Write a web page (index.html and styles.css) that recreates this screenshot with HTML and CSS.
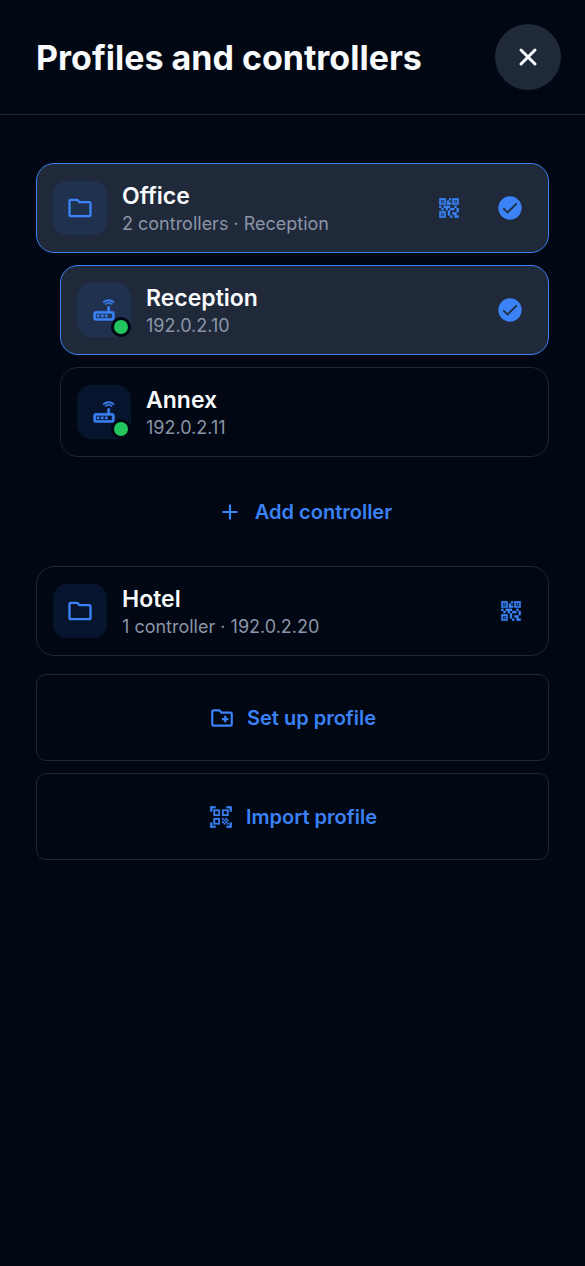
FILE: index.html
```html
<!DOCTYPE html>
<html lang="en">
<head>
<meta charset="utf-8">
<meta name="viewport" content="width=device-width, initial-scale=1">
<title>Profiles and controllers</title>
<link rel="stylesheet" href="styles.css">
</head>
<body>
<svg class="sprite" aria-hidden="true">
  <symbol id="folder" viewBox="0 0 24 24"><path d="M4 20q-.8 0-1.400-.6T2 18V6q0-.8.6-1.400T4 4h5.200q.4 0 .75.150t.65.450L12 6h8q.8 0 1.400.6T22 8v10q0 .8-.6 1.400T20 20H4Zm0-2h16V8h-8.800l-2-2H4v12Z"/></symbol>
  <symbol id="router" viewBox="0 0 24 24"><path d="M20.200 5.900l.8-.8C19.600 3.700 17.800 3 16 3s-3.600.7-5 2.100l.8.8C13 4.800 14.500 4.200 16 4.200s3 .6 4.200 1.700zm-.9.800c-.9-.9-2.100-1.400-3.300-1.400s-2.400.5-3.300 1.400l.8.800c.7-.7 1.600-1 2.500-1 .9 0 1.800.3 2.500 1l.8-.8zM19 13h-2V9h-2v4H5c-1.100 0-2 .9-2 2v4c0 1.100.9 2 2 2h14c1.100 0 2-.9 2-2v-4c0-1.100-.9-2-2-2zm0 6H5v-4h14v4zM6 16h2v2H6zm3.500 0h2v2h-2zm3.500 0h2v2h-2z" stroke="currentColor" stroke-width=".3"/></symbol>
  <symbol id="qr" viewBox="0 0 24 24"><path d="M15 21h-2v-2h2v2zm-2-7h-2v5h2v-5zm8-2h-2v4h2v-4zm-2-2h-2v2h2v-2zM7 12H5v2h2v-2zm-2-2H3v2h2v-2zm7-5h2V3h-2v2zm-7.500-.5v3h3v-3h-3zM9 9H3V3h6v6zm-4.500 7.500v3h3v-3h-3zM9 21H3v-6h6v6zm7.500-16.500v3h3v-3h-3zM21 9h-6V3h6v6zm-2 10v-3h-4v2h2v3h4v-2h-2zm-2-7h-4v2h4v-2zm-4-2H7v2h2v2h2v-2h2v-2zm1-1V7h-2V5h-2v4h4zM6.750 5.250h-1.500v1.500h1.500v-1.500zm0 12h-1.500v1.500h1.500v-1.500zm12-12h-1.500v1.500h1.500v-1.500z" stroke="currentColor" stroke-width=".2"/></symbol>
  <symbol id="check" viewBox="0 0 24 24"><circle cx="12" cy="12" r="10"/><path class="tick" d="M6.300 12.300l3.600 3.600 7.900-7.900"/></symbol>
  <symbol id="folder-plus" viewBox="0 0 24 24"><path d="M20 6h-8l-2-2H4c-1.110 0-2 .89-2 2v12c0 1.110.89 2 2 2h16c1.110 0 2-.89 2-2V8c0-1.110-.89-2-2-2zm0 12H4V6h5.170l2 2H20v10zm-8-4h2v2h2v-2h2v-2h-2v-2h-2v2h-2z"/></symbol>
  <symbol id="scan" viewBox="0 0 24 24"><path d="M9.500 6.500v3h-3v-3h3M11 5H5v6h6V5zm-1.500 9.500v3h-3v-3h3M11 13H5v6h6v-6zm6.500-6.500v3h-3v-3h3M19 5h-6v6h6V5zm-6 8h1.500v1.500H13V13zm1.500 1.500H16V16h-1.500v-1.500zM16 13h1.500v1.500H16V13zm-3 3h1.500v1.500H13V16zm1.500 1.500H16V19h-1.500v-1.500zM16 16h1.500v1.500H16V16zm1.500-1.500H19V16h-1.500v-1.500zm0 3H19V19h-1.500v-1.500zM22 7h-2V4h-3V2h5v5zm0 15v-5h-2v3h-3v2h5zM2 22h5v-2H4v-3H2v5zM2 2v5h2V4h3V2H2z" stroke="currentColor" stroke-width=".2"/></symbol>
</svg>

<header class="header">
  <h1 class="title">Profiles and controllers</h1>
  <button class="close" type="button" aria-label="Close">
    <svg class="close-icon" viewBox="0 0 24 24"><path d="M5 5l14 14M19 5l-14 14"/></svg>
  </button>
</header>

<main class="content">
  <section class="group">
    <div class="card selected">
      <button class="card-main" type="button">
        <span class="tile"><svg class="icon"><use href="#folder"/></svg></span>
        <span class="text"><span class="name">Office</span><span class="detail">2 controllers · Reception</span></span>
      </button>
      <button class="action" type="button" aria-label="Show QR code for Office"><svg class="icon icon-small"><use href="#qr"/></svg></button>
      <span class="mark"><svg class="icon" role="img" aria-label="Selected"><use href="#check"/></svg></span>
    </div>
    <div class="nested">
      <div class="card selected">
        <button class="card-main" type="button">
          <span class="tile"><svg class="icon"><use href="#router"/></svg><span class="status"></span></span>
          <span class="text"><span class="name">Reception</span><span class="detail">192.0.2.10</span></span>
        </button>
        <span class="mark"><svg class="icon" role="img" aria-label="Selected"><use href="#check"/></svg></span>
      </div>
      <div class="card">
        <button class="card-main" type="button">
          <span class="tile"><svg class="icon"><use href="#router"/></svg><span class="status"></span></span>
          <span class="text"><span class="name">Annex</span><span class="detail">192.0.2.11</span></span>
        </button>
      </div>
      <button class="wide" type="button">
        <svg class="icon icon-small stroke" viewBox="0 0 24 24"><path d="M12 5v14M5 12h14"/></svg>
        <span>Add controller</span>
      </button>
    </div>
  </section>

  <section class="group">
    <div class="card">
      <button class="card-main" type="button">
        <span class="tile"><svg class="icon"><use href="#folder"/></svg></span>
        <span class="text"><span class="name">Hotel</span><span class="detail">1 controller · 192.0.2.20</span></span>
      </button>
      <button class="action" type="button" aria-label="Show QR code for Hotel"><svg class="icon icon-small"><use href="#qr"/></svg></button>
    </div>
  </section>

  <div class="footer-actions">
    <button class="wide outlined" type="button"><svg class="icon icon-small"><use href="#folder-plus"/></svg><span>Set up profile</span></button>
    <button class="wide outlined" type="button"><svg class="icon icon-small"><use href="#scan"/></svg><span>Import profile</span></button>
  </div>
</main>
</body>
</html>
```

FILE: styles.css
```css
:root {
  --bg: #010713;
  --surface: #1f293a;
  --border: #1f2732;
  --blue: #3b82f6;
  --muted: #8b95a7;
}

* { box-sizing: border-box; }

body {
  margin: 0;
  min-height: 100vh;
  background: var(--bg);
  color: #f8fafc;
  font-family: Inter, "Liberation Sans", sans-serif;
}

button {
  margin: 0;
  padding: 0;
  border: 0;
  background: none;
  color: inherit;
  font: inherit;
  cursor: pointer;
}

.sprite { display: none; }

.header {
  display: flex;
  align-items: center;
  justify-content: space-between;
  padding: 24px 24px 24px 36px;
  border-bottom: 1px solid var(--border);
}

.title {
  margin: 0;
  padding-top: 2px;
  font-size: 34px;
  line-height: 40px;
  font-weight: 700;
}

.close {
  display: flex;
  flex: none;
  align-items: center;
  justify-content: center;
  width: 66px;
  height: 66px;
  border-radius: 50%;
  background: var(--surface);
}

.close-icon {
  width: 24px;
  height: 24px;
  fill: none;
  stroke: currentColor;
  stroke-width: 3;
  stroke-linecap: round;
}

.content {
  display: flex;
  flex-direction: column;
  gap: 12px;
  padding: 48px 36px;
}

.group,
.nested,
.footer-actions {
  display: flex;
  flex-direction: column;
  gap: 12px;
}

.nested { padding-left: 24px; }

.footer-actions { padding-top: 6px; }

.card {
  display: flex;
  align-items: center;
  gap: 18px;
  padding: 14px 16px;
  border: 1px solid var(--border);
  border-radius: 18px;
}

.card.selected {
  border-color: var(--blue);
  background: var(--surface);
}

.card-main {
  display: flex;
  flex: 1;
  align-items: center;
  gap: 15px;
  min-width: 0;
  text-align: left;
}

.tile {
  position: relative;
  display: flex;
  flex: none;
  align-items: center;
  justify-content: center;
  width: 54px;
  height: 54px;
  border-radius: 14px;
  background: #07142d;
  color: var(--blue);
}

.selected .tile { background: #203150; }

.status {
  position: absolute;
  right: 0;
  bottom: 0;
  width: 20px;
  height: 20px;
  border: 3px solid var(--bg);
  border-radius: 50%;
  background: #22c55e;
}

.text {
  display: flex;
  flex-direction: column;
  padding-top: 4px;
}

.name {
  font-size: 23px;
  line-height: 28px;
  font-weight: 600;
}

.detail {
  color: var(--muted);
  font-size: 18px;
  line-height: 28px;
}

.action,
.mark {
  display: flex;
  flex: none;
  align-items: center;
  justify-content: center;
  width: 42px;
  height: 42px;
  color: var(--blue);
}

.mark { width: 44px; }

.icon {
  width: 28px;
  height: 28px;
  fill: currentColor;
}

.icon-small {
  width: 26px;
  height: 26px;
}

.tick {
  fill: none;
  stroke: var(--surface);
  stroke-width: 1.5;
}

.stroke {
  fill: none;
  stroke: currentColor;
  stroke-width: 2;
}

.wide {
  display: flex;
  align-items: center;
  justify-content: center;
  gap: 12px;
  height: 85px;
  color: var(--blue);
  font-size: 20px;
  line-height: 30px;
  font-weight: 600;
}

.outlined {
  height: 87px;
  border: 1px solid var(--border);
  border-radius: 10px;
}
```
